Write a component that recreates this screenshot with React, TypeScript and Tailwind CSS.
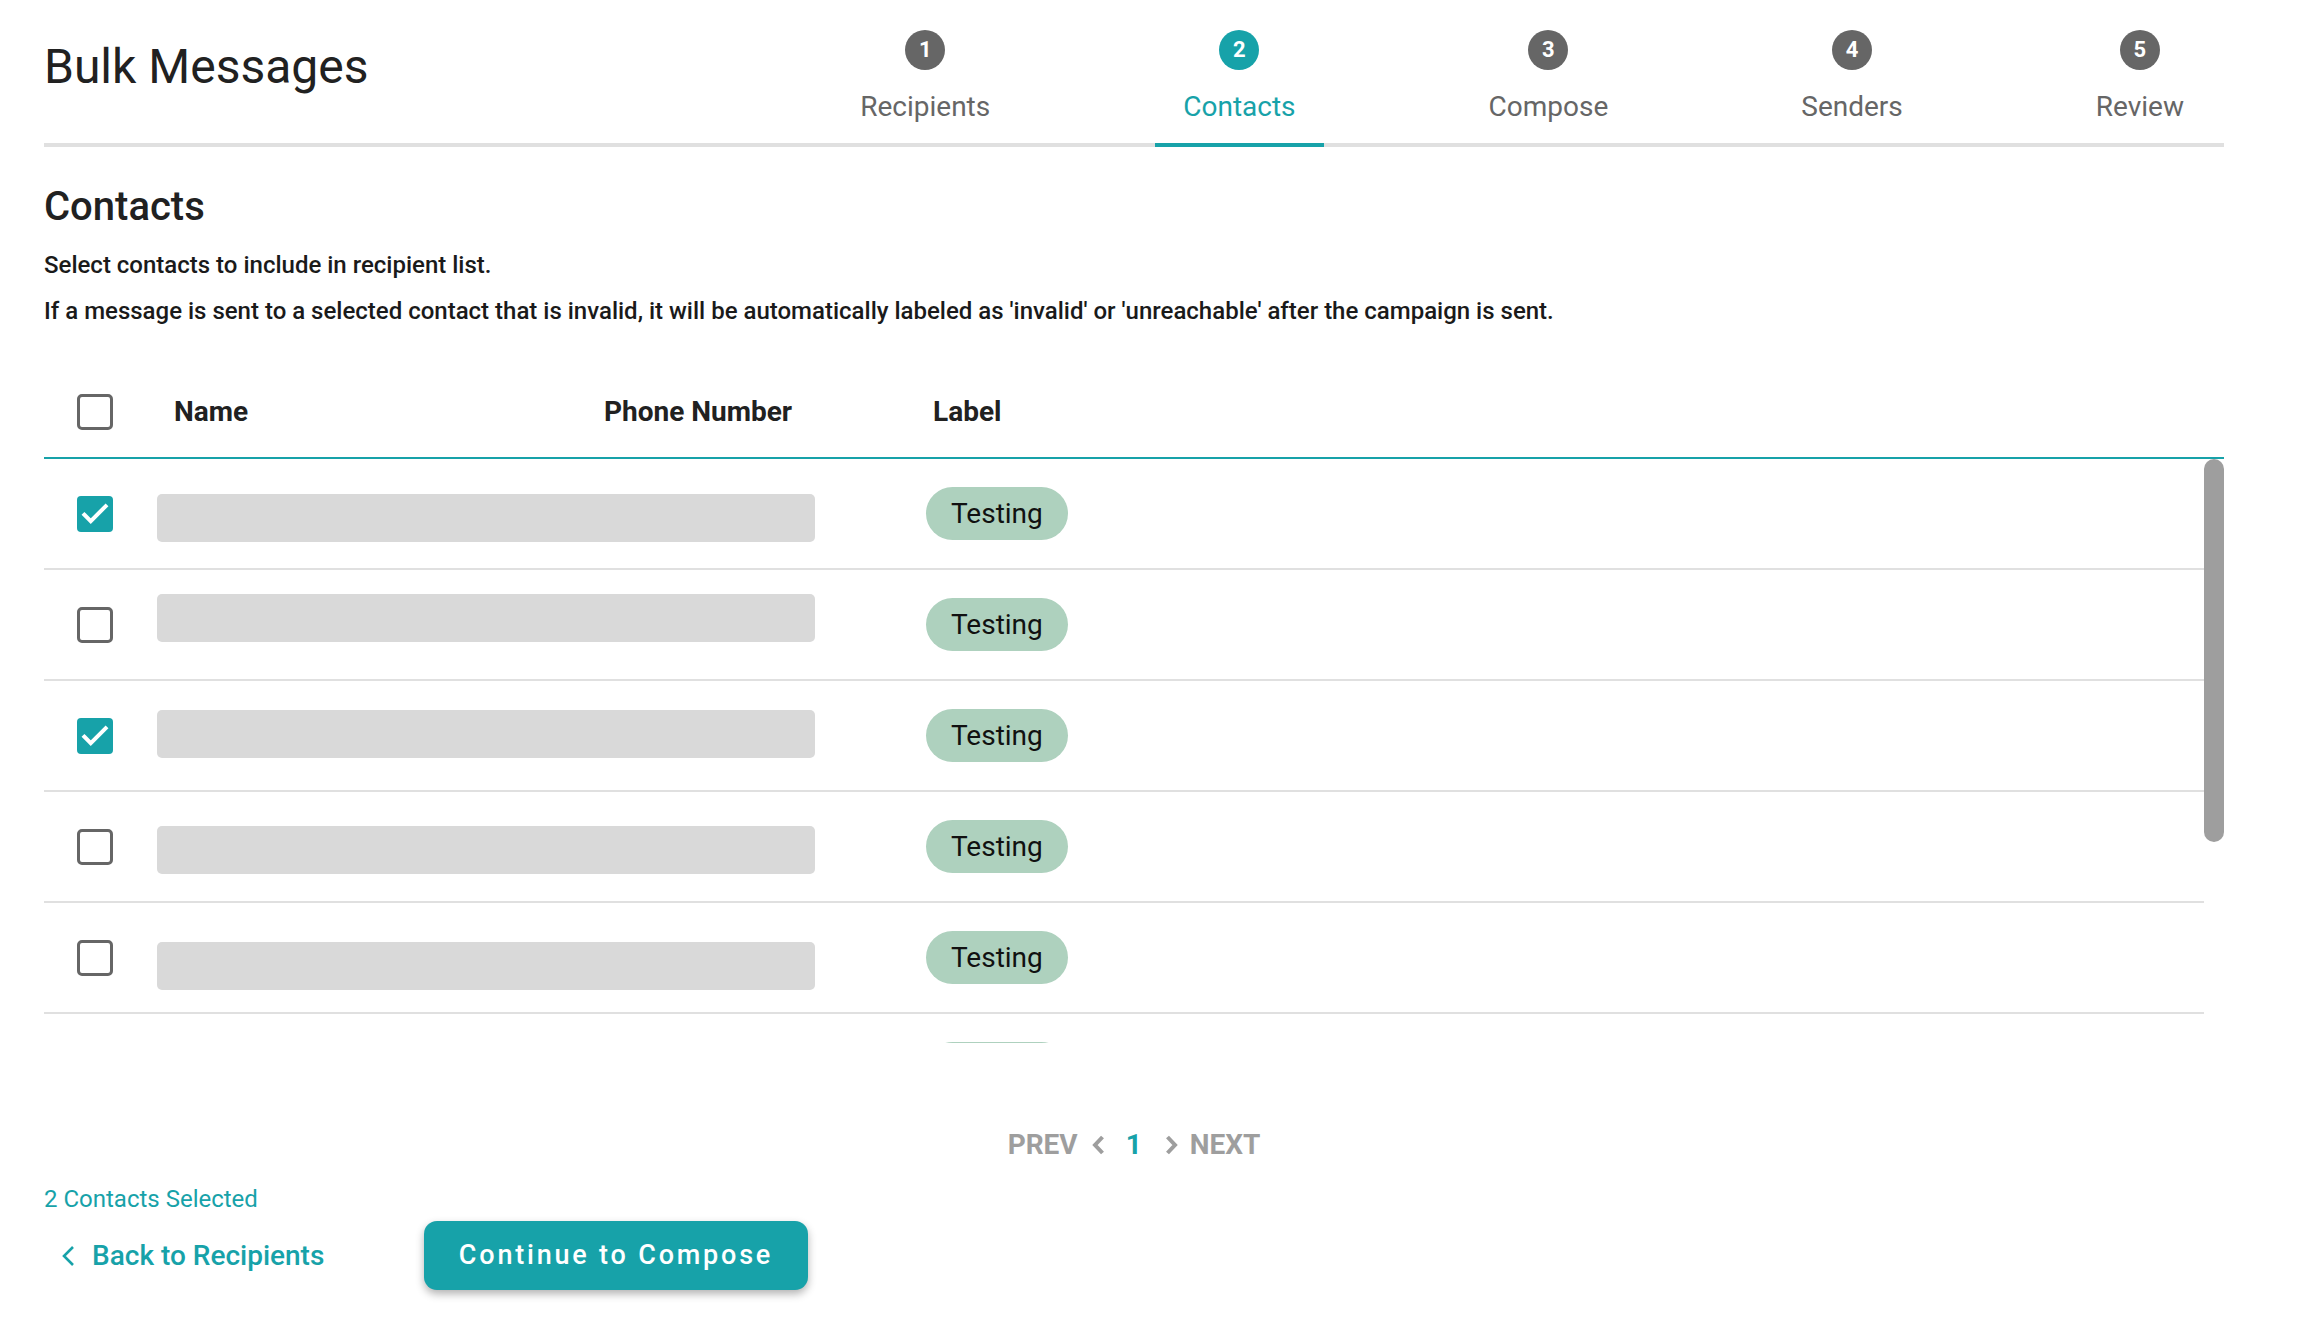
import React from "react";

function Check({ checked }: { checked: boolean }) {
  return checked ? (
    <div className="w-[36px] h-[36px] rounded-[4px] bg-[#17a2a9] flex items-center justify-center shrink-0">
      <svg viewBox="0 0 24 24" className="w-[34px] h-[34px]" fill="none" stroke="white" strokeWidth="2.8" strokeLinecap="square" strokeLinejoin="miter">
        <path d="M4.5 12.5l4.5 4.5L19.5 6.5" />
      </svg>
    </div>
  ) : (
    <div className="w-[36px] h-[36px] rounded-[5px] border-[3px] border-[#666666] shrink-0" />
  );
}

const steps = [
  { n: 1, label: "Recipients", active: false },
  { n: 2, label: "Contacts", active: true },
  { n: 3, label: "Compose", active: false },
  { n: 4, label: "Senders", active: false },
  { n: 5, label: "Review", active: false },
];

const rows = [
  { checked: true, mt: "mt-[35px]" },
  { checked: false, mt: "mt-[24px]" },
  { checked: true, mt: "mt-[29px]" },
  { checked: false, mt: "mt-[34px]" },
  { checked: false, mt: "mt-[39px]" },
  { checked: false, mt: "mt-[30px]" },
  { checked: false, mt: "mt-[30px]" },
  { checked: false, mt: "mt-[30px]" },
];

export default function App() {
  return (
    <div className="min-h-screen w-full bg-white pl-[44px] pr-[74px] font-['Roboto',sans-serif] text-[#212121]">
      {/* Header */}
      <div className="flex items-start justify-between border-b-[4px] border-[#e0e0e0]">
        <h1 className="mt-[43px] text-[48px] leading-none font-normal text-[#212121]">Bulk Messages</h1>
        <div className="flex gap-[137px] mr-[12px]">
          {steps.map((s) => (
            <div
              key={s.n}
              className={`flex flex-col items-center pt-[30px] pb-[22px] px-[28px] -mb-[4px] border-b-[4px] ${
                s.active ? "border-[#17a2a9]" : "border-transparent"
              }`}
            >
              <div
                className={`w-[40px] h-[40px] rounded-full flex items-center justify-center text-white text-[22px] font-bold leading-none ${
                  s.active ? "bg-[#17a2a9]" : "bg-[#666666]"
                }`}
              >
                {s.n}
              </div>
              <div
                className={`mt-[23px] text-[28px] leading-none ${
                  s.active ? "text-[#17a2a9]" : "text-[#666666]"
                }`}
              >
                {s.label}
              </div>
            </div>
          ))}
        </div>
      </div>

      {/* Section intro */}
      <h2 className="mt-[40px] text-[40px] leading-none font-medium text-[#212121]">Contacts</h2>
      <p className="mt-[26px] text-[24px] leading-none font-medium text-[#1a1a1a]">Select contacts to include in recipient list.</p>
      <p className="mt-[22px] text-[24px] leading-none font-medium text-[#1a1a1a]">
        If a message is sent to a selected contact that is invalid, it will be automatically labeled as 'invalid' or 'unreachable' after the campaign is sent.
      </p>

      {/* Table header */}
      <div className="mt-[43px] h-[93px] flex items-center border-b-[2px] border-[#17a2a9] text-[28px] font-bold leading-none text-[#212121]">
        <div className="w-[130px] pl-[33px] shrink-0">
          <Check checked={false} />
        </div>
        <div className="w-[430px] shrink-0">Name</div>
        <div className="w-[329px] shrink-0">Phone Number</div>
        <div>Label</div>
      </div>

      {/* Table body with scrollbar */}
      <div className="flex h-[584px]">
        <div className="flex-1 overflow-hidden">
          {rows.map((r, i) => (
            <div key={i} className="h-[111px] flex items-center border-b-[2px] border-[#e0e0e0] pl-[33px]">
              <Check checked={r.checked} />
              <div className={`ml-[44px] w-[658px] h-[48px] rounded-[5px] bg-[#d9d9d9] self-start ${r.mt}`} />
              <div className="ml-[111px] h-[53px] px-[25px] rounded-full bg-[#aed1be] flex items-center text-[28px] leading-none text-[#111111]">
                Testing
              </div>
            </div>
          ))}
        </div>
        <div className="w-[20px] shrink-0">
          <div className="w-[20px] h-[383px] rounded-full bg-[#9e9e9e]" />
        </div>
      </div>

      {/* Pagination */}
      <div className="mt-[88px] flex items-center justify-center text-[28px] leading-none font-bold text-[#9e9e9e]">
        <span>PREV</span>
        <svg viewBox="0 0 14 22" className="ml-[13px] w-[14px] h-[22px]" fill="none" stroke="#9e9e9e" strokeWidth="4">
          <path d="M11.5 3L4 11l7.5 8" />
        </svg>
        <span className="ml-[21px] text-[#17a2a9]">1</span>
        <svg viewBox="0 0 14 22" className="ml-[23px] w-[14px] h-[22px]" fill="none" stroke="#9e9e9e" strokeWidth="4">
          <path d="M2.5 3L10 11l-7.5 8" />
        </svg>
        <span className="ml-[11px]">NEXT</span>
      </div>

      {/* Footer */}
      <div className="mt-[28px] text-[24px] leading-none text-[#17a2a9]">2 Contacts Selected</div>
      <div className="mt-[10px] flex items-center">
        <button className="w-[380px] shrink-0 flex items-center pl-[16px] text-[28px] font-medium leading-none text-[#17a2a9]">
          <svg viewBox="0 0 16 22" className="w-[16px] h-[22px]" fill="none" stroke="#17a2a9" strokeWidth="2.6">
            <path d="M13 2L4 11l9 9" />
          </svg>
          <span className="ml-[16px]">Back to Recipients</span>
        </button>
        <button className="w-[384px] h-[69px] rounded-[13px] bg-[#17a2a9] text-white text-[27px] font-medium leading-none tracking-[2.8px] shadow-[0_4px_8px_rgba(0,0,0,0.3)] flex items-center justify-center">
          Continue to Compose
        </button>
      </div>
    </div>
  );
}
